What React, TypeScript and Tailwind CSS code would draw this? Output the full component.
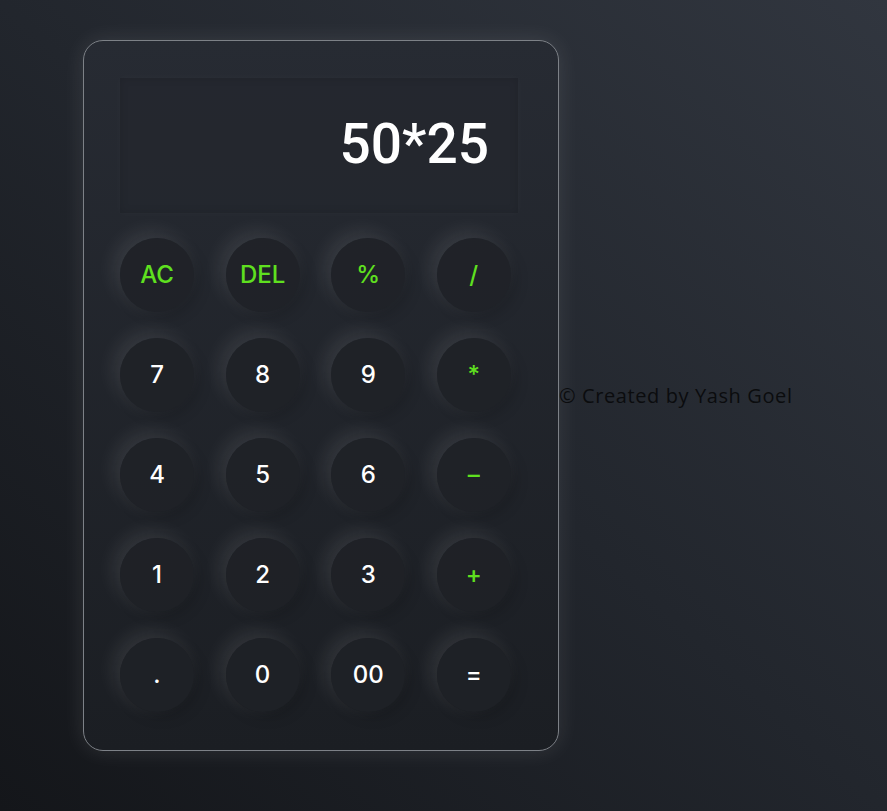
import React from "react";

const keys: { label: string; green?: boolean }[] = [
  { label: "AC", green: true },
  { label: "DEL", green: true },
  { label: "%", green: true },
  { label: "/", green: true },
  { label: "7" },
  { label: "8" },
  { label: "9" },
  { label: "*", green: true },
  { label: "4" },
  { label: "5" },
  { label: "6" },
  { label: "-", green: true },
  { label: "1" },
  { label: "2" },
  { label: "3" },
  { label: "+", green: true },
  { label: "." },
  { label: "0" },
  { label: "00" },
  { label: "=" },
];

export default function App() {
  return (
    <div
      className="min-h-[811px] w-full bg-linear-to-tr from-[#14161a] via-[#22262d] to-[#31363f] pl-[83px] pt-[40px] flex items-start"
      style={{ fontFamily: "Inter, 'Open Sans', sans-serif" }}
    >
      <div className="flex items-center">
        <div className="w-[476px] h-[711px] rounded-[20px] border border-[#7d8187] bg-linear-to-b from-[#272b33] to-[#1b1e23] pt-[37px] pl-[36px] shadow-[0_0_22px_rgba(255,255,255,0.10)] flex flex-col">
          <div className="w-[398px] h-[135px] bg-[#23272e]/70 shadow-[inset_0_0_8px_rgba(0,0,0,0.12),0_0_8px_rgba(255,255,255,0.03)] flex items-center justify-end pr-[29px]">
            <span
              className="text-white text-[55px] font-medium leading-none pb-[2px]"
              style={{ fontFamily: "Roboto, 'Liberation Sans', sans-serif" }}
            >
              50*25
            </span>
          </div>
          <div className="mt-[25px] grid grid-cols-[repeat(4,74px)] gap-x-[31.6px] gap-y-[26px]">
            {keys.map((k) => (
              <div
                key={k.label}
                className={
                  "w-[74px] h-[74px] rounded-full bg-[#1f2227]/80 shadow-[-6px_-6px_20px_rgba(255,255,255,0.10),5px_5px_14px_rgba(0,0,0,0.16)] flex items-center justify-center text-[24px] font-medium " +
                  (k.green ? "text-[#5fe01f]" : "text-white")
                }
              >
                {k.label === "-" ? "–" : k.label}
              </div>
            ))}
          </div>
        </div>
        <div
          className="text-[20px] text-[#0b0c0e] tracking-[0.6px]"
          style={{ fontFamily: "'Open Sans', sans-serif" }}
        >
          © Created by Yash Goel
        </div>
      </div>
    </div>
  );
}
